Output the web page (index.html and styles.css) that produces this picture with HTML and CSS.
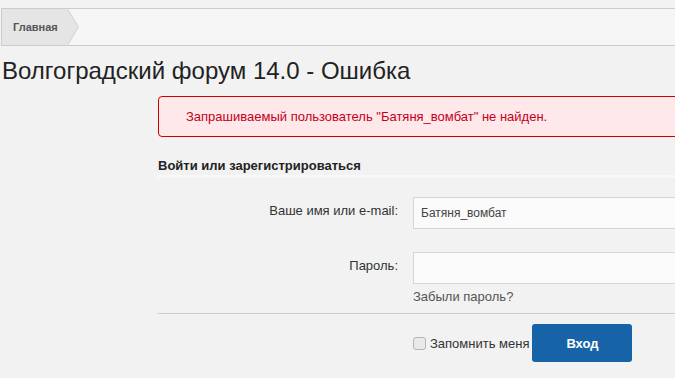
FILE: index.html
```html
<!DOCTYPE html>
<html lang="ru">

<head>
    <meta charset="UTF-8">
    <meta name="viewport" content="width=device-width, initial-scale=1.0">
    <title>Волгоградский форум 14.0 - Ошибка</title>
    <link rel="stylesheet" href="styles.css">
</head>

<body>
    <div class="crumbs">
        <a class="crumb" href="#">Главная</a>
    </div>

    <h1 class="title">Волгоградский форум 14.0 - Ошибка</h1>

    <div class="main">
        <div class="error-box">Запрашиваемый пользователь "Батяня_вомбат" не найден.</div>

        <h2 class="section-head">Войти или зарегистрироваться</h2>

        <form class="login-form">
            <div class="form-row">
                <label class="form-label" for="login">Ваше имя или e-mail:</label>
                <div class="form-field">
                    <input type="text" id="login" class="text-input" value="Батяня_вомбат">
                </div>
            </div>
            <div class="form-row form-row-last">
                <label class="form-label" for="password">Пароль:</label>
                <div class="form-field">
                    <input type="password" id="password" class="text-input">
                    <a class="forgot" href="#">Забыли пароль?</a>
                </div>
            </div>

            <div class="submit-row">
                <label class="remember"><input type="checkbox" class="check"> Запомнить меня</label>
                <button type="button" class="btn-login">Вход</button>
            </div>
        </form>
    </div>
</body>

</html>
```

FILE: styles.css
```css
html,
body {
    overflow: hidden;
}

body {
    margin: 0;
    background-color: #f2f2f2;
    font-family: "Liberation Sans", Arial, sans-serif;
    color: #222;
}

.crumbs {
    display: flex;
    margin: 8px 0 0 1px;
    height: 36px;
    background-color: #f6f6f6;
    border: 1px solid #cccccc;
    border-right: none;
}

.crumb {
    position: relative;
    display: block;
    padding: 0 10px 0 11px;
    line-height: 36px;
    background-color: #e5e5e5;
    color: #555;
    font-size: 11px;
    font-weight: bold;
    text-decoration: none;
}

.crumb::before,
.crumb::after {
    content: "";
    position: absolute;
    top: 0;
    border-top: 18px solid transparent;
    border-bottom: 18px solid transparent;
}

.crumb::before {
    left: 100%;
    border-left: 11px solid #cfcfcf;
}

.crumb::after {
    left: calc(100% - 1px);
    border-left: 11px solid #e5e5e5;
}

.title {
    margin: 11px 0 0 2px;
    font-size: 24px;
    font-weight: normal;
    line-height: 28px;
    color: #222;
}

.main {
    margin: 11px 0 0 158px;
    width: 600px;
}

.error-box {
    padding: 10px 27px;
    line-height: 19px;
    font-size: 13px;
    color: #c4001a;
    background-color: #fee8ea;
    border: 1px solid #cc0000;
    border-radius: 4px;
}

.section-head {
    margin: 21px 0 0;
    padding-bottom: 1px;
    font-size: 13px;
    line-height: 16px;
    color: #222;
    border-bottom: 3px solid #f8f8f8;
}

.login-form {
    margin-top: 19px;
}

.form-row {
    display: flex;
    margin-bottom: 23px;
}

.form-row-last {
    margin-bottom: 0;
}

.form-label {
    width: 240px;
    padding: 6px 15px 0 0;
    text-align: right;
    font-size: 13px;
    line-height: 16px;
    color: #333;
}

.form-field {
    flex: 1;
}

.text-input {
    display: block;
    box-sizing: border-box;
    width: 300px;
    height: 32px;
    padding: 0 7px;
    font-family: "Liberation Sans", Arial, sans-serif;
    font-size: 12px;
    color: #444;
    background-color: #fafafa;
    border: 1px solid #d6d6d6;
    outline: none;
}

.forgot {
    display: block;
    margin-top: 5px;
    font-size: 13px;
    line-height: 16px;
    color: #555;
    text-decoration: none;
}

.submit-row {
    display: flex;
    align-items: center;
    margin-top: 8px;
    padding: 10px 0 0 255px;
    border-top: 1px solid #cccccc;
}

.remember {
    display: flex;
    align-items: center;
    font-size: 13px;
    color: #333;
}

.check {
    appearance: none;
    box-sizing: border-box;
    width: 13px;
    height: 13px;
    margin: 1px 4px 0 0;
    background-color: #e9e9e9;
    border: 1px solid #b5b5b5;
    border-radius: 3px;
}

.btn-login {
    width: 100px;
    height: 38px;
    margin-left: 3px;
    padding: 0;
    font-family: "Liberation Sans", Arial, sans-serif;
    font-size: 13px;
    font-weight: bold;
    color: #fff;
    background-color: #1664a7;
    border: none;
    border-radius: 3px;
    cursor: pointer;
}
```
